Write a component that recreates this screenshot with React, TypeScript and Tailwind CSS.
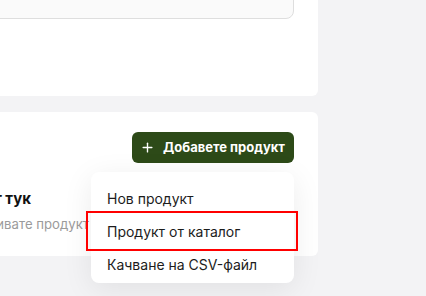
import React from 'react';
import { Plus } from 'lucide-react';

const menuItems = ['Нов продукт', 'Продукт от каталог', 'Качване на CSV-файл'];

const App: React.FC = () => {
  return (
    <div className="relative h-[296px] w-[426px] overflow-hidden bg-[#f3f3f5] font-['Inter',sans-serif]">
      <div className="-ml-[400px] -mt-[60px] flex w-[718px] flex-col gap-4">
        {/* top card with text field */}
        <div className="h-[156px] rounded-md bg-white p-6">
          <div className="h-[55px] rounded-lg border border-[#dedede] bg-[#fafafa]" />
        </div>

        {/* products card */}
        <div className="rounded-md bg-white px-6 pt-5 pb-[22px]">
          <div className="relative flex justify-end">
            <button className="flex h-[31px] w-[162px] items-center gap-2 rounded-md bg-[#2d4a18] pl-2 text-[13px] font-bold text-white">
              <Plus className="h-[15px] w-[15px]" strokeWidth={2.2} />
              Добавете продукт
            </button>

            <div className="absolute right-0 top-[40px] z-10 w-[203px] rounded-lg bg-white pt-[9px] pb-[2px] shadow-[0_6px_30px_rgba(0,0,0,0.08)]">
              {menuItems.map((label, i) => (
                <div
                  key={label}
                  className={`flex items-center px-4 text-[14px] text-[#1c1c1c] ${i === 0 ? 'h-[34px]' : 'h-[33px]'}`}
                >
                  {label}
                </div>
              ))}
              <div className="absolute left-[-5px] top-[39px] h-[40px] w-[212px] border-2 border-[#ff0000]" />
            </div>
          </div>

          {/* empty state, its left half lies outside the window */}
          <div className="mt-[25px] flex flex-col">
            <div className="h-[22px] w-[407px] whitespace-nowrap text-right text-[15px] font-bold leading-[22px] text-[#111]">
              Добавете първия си продукт тук
            </div>
            <div className="mt-1 h-[20px] w-[465px] whitespace-nowrap text-right text-[13.2px] leading-[20px] text-[#9b9b9b]">
              Тук ще откривате продукт
            </div>
          </div>
        </div>
      </div>
    </div>
  );
};

export default App;
